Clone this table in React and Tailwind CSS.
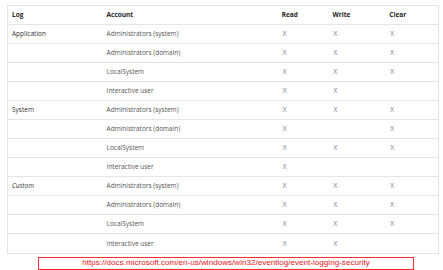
import React from 'react';

const rows = [
  { log: 'Application', account: 'Administrators (system)', r: true, w: true, c: true },
  { log: '', account: 'Administrators (domain)', r: true, w: true, c: true },
  { log: '', account: 'LocalSystem', r: true, w: true, c: true },
  { log: '', account: 'Interactive user', r: true, w: true, c: false },
  { log: 'System', account: 'Administrators (system)', r: true, w: true, c: true },
  { log: '', account: 'Administrators (domain)', r: true, w: false, c: true },
  { log: '', account: 'LocalSystem', r: true, w: true, c: true },
  { log: '', account: 'Interactive user', r: true, w: false, c: false },
  { log: 'Custom', italic: true, account: 'Administrators (system)', r: true, w: true, c: true },
  { log: '', account: 'Administrators (domain)', r: true, w: true, c: true },
  { log: '', account: 'LocalSystem', r: true, w: true, c: true },
  { log: '', account: 'Interactive user', r: true, w: true, c: false },
];

const App = () => {
  return (
    <div className="w-[443px] h-[270px] bg-white overflow-hidden">
      <div className="pt-[5px] pl-[7px]">
        <div className="w-[432px] border border-[#e4e4e4] font-['Open_Sans',sans-serif] text-[6.5px]">
          {/* header */}
          <div className="flex h-[19px] items-center border-b border-[#e4e4e4] font-bold text-[#262626]">
            <div className="w-[95px] pl-[4px]">Log</div>
            <div className="w-[176px] pl-[4px]">Account</div>
            <div className="w-[51px] pl-[4px]">Read</div>
            <div className="w-[57px] pl-[4px]">Write</div>
            <div className="w-[53px] pl-[4px]">Clear</div>
          </div>
          {rows.map((row, i) => (
            <div
              key={i}
              className={`flex h-[19px] items-center ${i < rows.length - 1 ? 'border-b border-[#e4e4e4]' : ''}`}
            >
              <div className={`w-[95px] pl-[4px] text-[#333333] ${row.italic ? 'italic' : ''}`}>{row.log}</div>
              <div className="w-[176px] pl-[4px] text-[#555555]">{row.account}</div>
              <div className="w-[51px] pl-[5px] text-[#7a7a7a]">{row.r ? 'X' : ''}</div>
              <div className="w-[57px] pl-[5px] text-[#7a7a7a]">{row.w ? 'X' : ''}</div>
              <div className="w-[53px] pl-[5px] text-[#7a7a7a]">{row.c ? 'X' : ''}</div>
            </div>
          ))}
        </div>
      </div>
      <div className="ml-[38px] mt-[3px] w-[376px] h-[13px] border-[1.5px] border-[#ff2b2b] flex items-center justify-center font-['Liberation_Sans',Arial,sans-serif] text-[8.1px] text-[#e8141b] leading-none">
        https://docs.microsoft.com/en-us/windows/win32/eventlog/event-logging-security
      </div>
    </div>
  );
};

export default App;
